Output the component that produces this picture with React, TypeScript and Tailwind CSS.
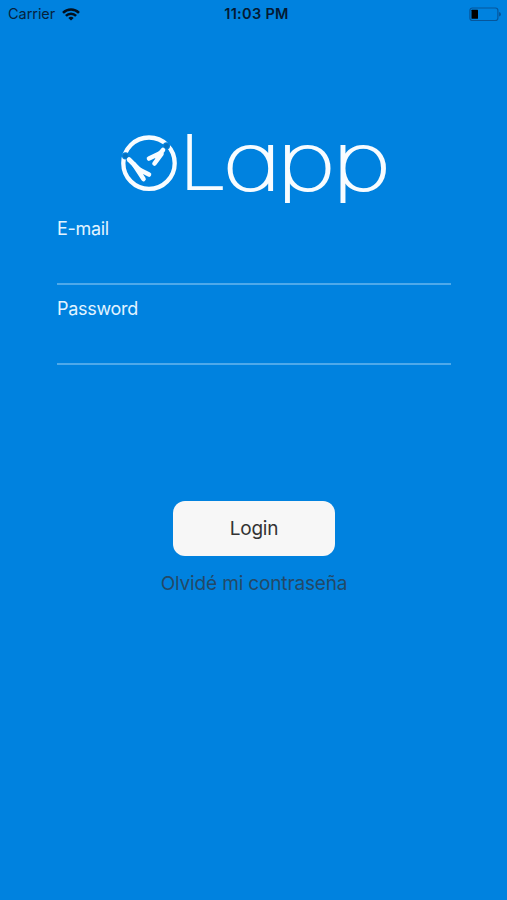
function StatusBar() {
  return (
    <header className="grid h-7 grid-cols-3 items-center pl-2 pr-[6px] text-[15px] leading-7 text-[#06223d]">
      <div className="flex items-center gap-[7px]">
        <span className="text-[14.5px] tracking-[-0.05px]">Carrier</span>
        <svg width="18" height="13" viewBox="0 0 18 13" fill="none" stroke="#03101e" strokeWidth="2.5">
          <path d="M1 4.9C5.5.4 12.500.4 17 4.9" />
          <path d="M3.900 7.900C6.700 5 11.300 5 14.100 7.900" />
          <path d="M9 12.600 6.300 9.900Q9 7.800 11.700 9.900Z" fill="#03101e" stroke="none" />
        </svg>
      </div>
      <span className="pl-1 text-center text-[14.5px] font-semibold tracking-[0.3px] text-[#041a33]">11:03 PM</span>
      <svg className="justify-self-end" width="32" height="15" viewBox="0 0 32 15">
        <rect x="0.900" y="1" width="28" height="12.500" rx="2.500" fill="none" stroke="#06569b" strokeWidth="1.200" />
        <rect x="2.500" y="2.800" width="6.500" height="9" rx="0.500" fill="#000" />
        <path d="M30 5q2 .5 2 2.200T30 9.500z" fill="#06569b" />
      </svg>
    </header>
  );
}

function Logo() {
  return (
    <svg className="mx-auto block overflow-visible" width="270" height="76" viewBox="119 132 270 76" aria-label="OLapp">
      <defs>
        <clipPath id="wordmark">
          <rect x="170" y="120" width="230" height="83" />
        </clipPath>
      </defs>
      <circle cx="149" cy="163.200" r="25.700" fill="none" stroke="#f8fcff" strokeWidth="4.300" />
      <circle cx="125.500" cy="155.800" r="3.600" fill="#0082df" />
      <circle cx="166.500" cy="145.800" r="3.600" fill="#0082df" />
      <g stroke="#f8fcff" strokeLinecap="round" fill="none">
        <path d="M129 159.500 140 170.500" strokeWidth="4.600" />
        <path d="M134 164.500 143.500 179M139 169.500 149 174.500" strokeWidth="4.600" />
        <path d="M163 150 157 157" strokeWidth="4.600" />
        <path d="M159.500 153.500 149 158.500M161.500 154 154.500 163.500" strokeWidth="4.600" />
      </g>
      <circle cx="125.500" cy="156" r="2.400" fill="#0871bd" />
      <circle cx="166.500" cy="146" r="2.400" fill="#0871bd" />
      <g
        clipPath="url(#wordmark)"
        className="font-['Inter'] font-thin [font-feature-settings:'cv11'] [&>text]:[vector-effect:non-scaling-stroke]"
        fill="#f8fcff"
        stroke="#f8fcff"
        strokeWidth="2.300"
      >
        <text transform="translate(179 189.300) scale(1.150 1)" fontSize="74">L</text>
        <text transform="translate(222.500 190.300) scale(1.280 1)" fontSize="79.500">a</text>
        <text transform="translate(276.500 190.300) scale(1.280 1)" fontSize="79.500">p</text>
        <text transform="translate(332 190.300) scale(1.280 1)" fontSize="79.500">p</text>
      </g>
    </svg>
  );
}

function Field({ label, type }: { label: string; type: string }) {
  return (
    <label className="block h-[79.500px] text-[18px] leading-6 tracking-[-0.3px] text-[#e2f4ff]">
      {label}
      <input
        type={type}
        className="block h-[44px] w-full border-b-2 border-[#4ea9ea] bg-transparent outline-none"
      />
    </label>
  );
}

export default function App() {
  return (
    <main className="flex h-[900px] w-[507px] flex-col bg-[#0082df] font-['Inter','Liberation_Sans',sans-serif]">
      <StatusBar />
      <div className="mt-[104px]">
        <Logo />
      </div>
      <form className="ml-[57px] mr-[56px] mt-[9.400px]">
        <Field label="E-mail" type="email" />
        <Field label="Password" type="password" />
        <div className="mt-[124.600px] flex flex-col items-center">
          <button type="button" className="h-[55px] w-[162px] rounded-[12px] bg-[#f7f7f7] pt-[2px] text-[19px] tracking-[-0.25px] text-[#333]">
            Login
          </button>
          <a className="mt-[14px] text-[19px] leading-7 tracking-[-0.150px] text-[#234967]">Olvidé mi contraseña</a>
        </div>
      </form>
    </main>
  );
}
